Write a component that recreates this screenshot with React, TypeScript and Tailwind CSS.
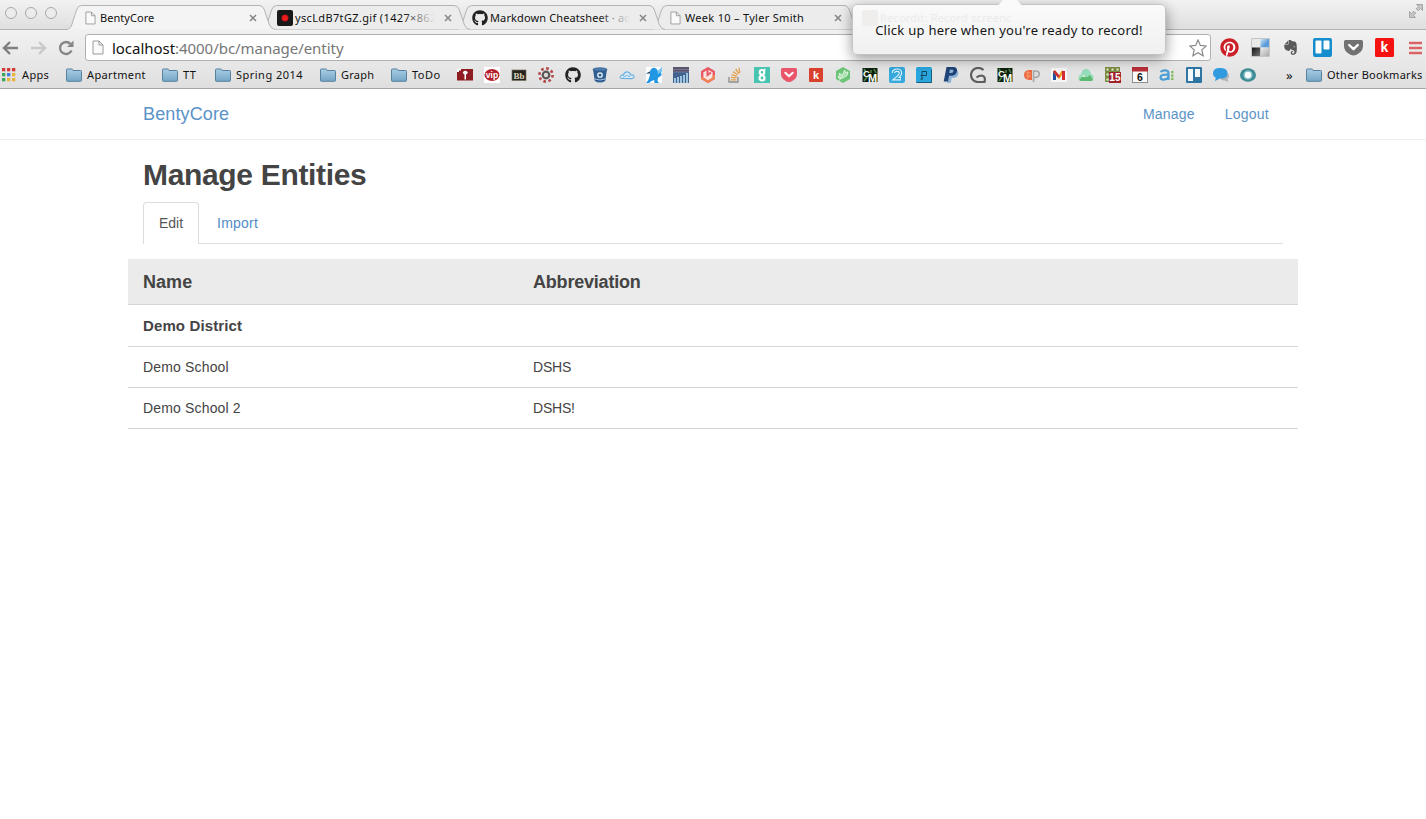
import React from "react";
import { FaGithub, FaPinterest, FaEvernote, FaGetPocket } from "react-icons/fa";

const chromeFont = "font-['Noto_Sans','DejaVu_Sans',sans-serif]";
const pageFont = "font-['Liberation_Sans',Arial,sans-serif]";

function PageIcon({ className }: { className: string }) {
  return (
    <svg viewBox="0 0 12 15" className={className} fill="#fafafa" stroke="#9a9a9a" strokeWidth="1">
      <path d="M1 1h6l4 4v9H1z" />
      <path d="M7 1v4h4" fill="none" />
    </svg>
  );
}

function Folder() {
  return (
    <svg viewBox="0 0 16 14" className="h-[14px] w-4 shrink-0">
      <defs>
        <linearGradient id="folder" x1="0" y1="0" x2="0" y2="1">
          <stop offset="0" stopColor="#a9cde4" />
          <stop offset="1" stopColor="#74a5c6" />
        </linearGradient>
      </defs>
      <path d="M.5 12.5V1.8q0-.8.8-.8h4.6q.6 0 .8.6l.3.9h7.7q.8 0 .8.8v9.2q0 .8-.8.8H1.3q-.8 0-.8-.8z" fill="url(#folder)" stroke="#56819f" />
      <path d="M1 4.5h14" stroke="#9cc3dc" />
    </svg>
  );
}

function Close() {
  return (
    <svg viewBox="0 0 8 8" className="h-2 w-2 shrink-0" stroke="#858585" strokeWidth="1.5">
      <path d="M1 1l6 6M7 1L1 7" />
    </svg>
  );
}

function RecordIcon() {
  return (
    <svg viewBox="0 0 16 16" className="h-4 w-4">
      <rect width="16" height="16" rx="2" fill="#181818" />
      <circle cx="8" cy="8" r="3.3" fill="#ee1c1c" stroke="#8d1010" strokeWidth=".6" />
    </svg>
  );
}

type TabProps = { active?: boolean; title: string; icon: React.ReactNode; layer: string; text: string; fade?: boolean };

function Tab({ active, title, icon, layer, text, fade }: TabProps) {
  return (
    <div className={`relative flex h-[25px] w-[195px] shrink-0 items-center ${layer}`}>
      <svg viewBox="0 0 208 25" className="absolute left-0 top-0 h-[25px] w-[208px]">
        <path
          d="M0 24.5C3 24 4 22 5 19L9.500 5Q11 .5 14.500.5H192Q195.500.5 197 4L202.500 20Q204 24 208 24.500"
          fill={active ? "#f4f4f4" : "#ececec"}
          stroke="#b4b4b4"
        />
        {active && <path d="M1 24.500H207" stroke="#f1f1f1" />}
      </svg>
      <div className="relative flex w-full items-center pl-[15px]">
        <div className="flex h-4 w-4 shrink-0 items-center justify-center">{icon}</div>
        <div className={`relative w-[142px] overflow-hidden whitespace-nowrap text-[11px] leading-4 text-[#111] ${text}`}>
          {title}
          {fade && <div className="absolute right-0 top-0 h-4 w-8 bg-gradient-to-r from-transparent to-[#ececec]" />}
        </div>
        <div className="ml-[9px]">
          <Close />
        </div>
      </div>
    </div>
  );
}

function Ico({ children }: { children: React.ReactNode }) {
  return (
    <svg viewBox="0 0 16 16" className="h-4 w-4 shrink-0 font-['Liberation_Sans',sans-serif] font-bold">
      {children}
    </svg>
  );
}

function CmIcon() {
  return (
    <Ico>
      <rect x=".5" y="1" width="15" height="14" fill="#10200f" />
      <path d="M2 2l2 3M12 2l2 4M2 14l3-4M9 3v3M12 14l2-2" stroke="#4e8b4c" strokeWidth="1.500" />
      <text x="1" y="9.500" fontSize="9.500" fill="#f5fff2">C</text>
      <text x="6" y="14.500" fontSize="11" fill="#f5fff2">M</text>
    </Ico>
  );
}

function Favicons() {
  return (
    <div className="flex gap-[11px]">
      <Ico>
        <rect y="2" width="16" height="11.500" fill="#8f1c20" />
        <path d="M0 2h4v1.500H2V5H0z" fill="#fff" />
        <path d="M5.800 5.200Q8.200 2.400 10.800 5.200q-.2 2-1.800 2.300v5H7.500v-5Q6 7.200 5.800 5.200z" fill="#fff" />
      </Ico>
      <Ico>
        <rect width="16" height="16" fill="#fff" />
        <ellipse cx="8" cy="8" rx="7.500" ry="5.900" fill="#b51f2b" />
        <text x="8" y="11" fontSize="8.500" textAnchor="middle" fill="#fff">vip</text>
      </Ico>
      <Ico>
        <rect x="1" y="3" width="14" height="10.500" fill="#25231e" stroke="#77705c" strokeWidth=".7" />
        <text x="8" y="11.500" fontSize="9" textAnchor="middle" fill="#ddd6bd" className="font-['Liberation_Serif',serif]">Bb</text>
      </Ico>
      <Ico>
        <circle cx="8" cy="8" r="6.600" fill="none" stroke="#b4494c" strokeWidth="2.600" strokeDasharray="2.600 2.584" />
        <circle cx="8" cy="8" r="3.300" fill="#d8d8d8" stroke="#5c5254" strokeWidth="2.200" />
      </Ico>
      <FaGithub className="h-4 w-4 text-[#222]" />
      <Ico>
        <path d="M1 2.500L2.800 14q5.200 3 10.400 0L15 2.500z" fill="#2f5f92" />
        <ellipse cx="8" cy="2.500" rx="7" ry="1.800" fill="#4a7bac" stroke="#2a5483" strokeWidth=".6" />
        <circle cx="8" cy="8" r="2.200" fill="#2f5f92" stroke="#f0f5fa" strokeWidth="1.300" />
        <path d="M3 12q5 2 10 0" stroke="#a9c1d9" fill="none" />
      </Ico>
      <Ico>
        <path d="M2.500 11.500Q0 10.500 2 8.800q1.200-1.200 2.500-.8Q5.500 4.200 9 5q2.400.8 2.300 3 3.200-.6 3.700 1.400.3 2-2.200 2.200z" fill="#d9ebf6" stroke="#6bb0e0" strokeWidth="1.100" />
        <path d="M4 10.500Q7 7 11 9.500" fill="none" stroke="#6bb0e0" strokeWidth=".9" />
      </Ico>
      <Ico>
        <rect width="16" height="16" fill="#fff" />
        <path d="M0 6.500L4 4.500Q5 .5 8.500.8q2.500.3 3 3Q14 3 16 0q.3 4-1.500 6.200L16 7q-1 3-4 3.800L11.500 14l1.500 2H8.500l-.3-3Q5.500 13.500 3 16H0q3.500-3.500 4-9.500z" fill="#2196e3" />
        <path d="M11.500 3.800Q14 3 16 0v3.500l-4 4z" fill="#7cc6f2" />
        <path d="M0 6.500l4-2v1.700z" fill="#444" />
      </Ico>
      <Ico>
        <rect width="16" height="16" fill="#42618d" />
        <path d="M0 0h16v5H0z" fill="#5a5470" />
        <path d="M2 16v-5M5 16v-6M8 16V9M11 16V8M14 16V6" stroke="#b4dcf4" strokeWidth="1.600" />
        <path d="M0 2.500h16M0 5h16" stroke="#868da8" strokeWidth=".6" />
      </Ico>
      <Ico>
        <path d="M8 1.300l5.800 3.400v6.600L8 14.700l-5.800-3.400V4.700z" fill="#fbe5df" stroke="#e95867" strokeWidth="2.400" strokeLinejoin="round" />
        <path d="M2.200 10v1.300L8 14.700l5.800-3.400V8" fill="none" stroke="#f08457" strokeWidth="2.400" strokeLinejoin="round" />
        <path d="M7.500 2v6l3.500-2.500" fill="none" stroke="#e95867" strokeWidth="2" />
      </Ico>
      <Ico>
        <path d="M2 10v5h9v-5" fill="none" stroke="#8c8c8c" strokeWidth="1.300" />
        <path d="M3.800 12.800h5.500M4 10.300l5.500.6M4.600 7.600l5.200 1.800M6 4.600l4.600 3.200M8.600 2l3.200 4.500M12 .8l.8 5" stroke="#e4a04d" strokeWidth="1.300" />
      </Ico>
      <Ico>
        <rect width="16" height="16" fill="#49c4b0" />
        <circle cx="8" cy="5.200" r="2.300" fill="none" stroke="#fff" strokeWidth="2" />
        <circle cx="8" cy="11" r="2.500" fill="none" stroke="#fff" strokeWidth="2.200" />
        <path d="M10 3.200l1.500-1" stroke="#fff" strokeWidth="1.500" />
      </Ico>
      <Ico>
        <path d="M1.500 1h13Q16 1 16 2.500V7q0 4-4 6.500-2 1.500-4 1.500t-4-1.500Q0 11 0 7V2.500Q0 1 1.500 1z" fill="#e9566b" />
        <path d="M4.300 5.800L8 9.300l3.700-3.500" fill="none" stroke="#fff" strokeWidth="2" strokeLinecap="round" strokeLinejoin="round" />
      </Ico>
      <Ico>
        <rect x="1" y="1" width="14" height="14" rx="1" fill="#d9402d" />
        <text x="8" y="12" fontSize="11" textAnchor="middle" fill="#fff">k</text>
      </Ico>
      <Ico>
        <path d="M8 0l7 4v8l-7 4-7-4V4z" fill="#6cc576" />
        <path d="M4.500 13.500L8 7l1.500-4 1 2.500L13 5l-1 3.500-4 2.500-4 .5-1-2 2-.5-1-2.500 3 1" fill="#e2f6e4" fillOpacity=".55" stroke="#e2f6e4" strokeWidth=".9" />
      </Ico>
      <CmIcon />
      <Ico>
        <rect width="16" height="16" rx="2" fill="#35a8dc" />
        <path d="M4.500 6Q4.500 3.200 8 3.200T11.500 6Q11.500 8 7 11.700H12" fill="none" stroke="#e6f6fd" strokeWidth="3.400" />
        <path d="M4.500 6Q4.500 3.200 8 3.200T11.500 6Q11.500 8 7 11.700H11.500" fill="none" stroke="#35a8dc" strokeWidth="1.300" />
      </Ico>
      <Ico>
        <rect width="16" height="16" rx="1.500" fill="#29a6de" />
        <path d="M.5 15.500h15V3" stroke="#195d7a" fill="none" />
        <path d="M6 12V4.500h4.500v4H6M4.500 8.500H6M4.500 12H7" stroke="#12465d" fill="none" strokeWidth="1" />
      </Ico>
      <Ico>
        <path d="M5.500 3h7.500q2.800.5 2.300 4-1 4.200-5.300 4H8.700L7.800 16H4z" fill="#8fb3d6" />
        <path d="M3.500 0h7q4 .3 3.500 4-.8 4.700-5.500 4.700H6L5 14.500H.7zM6.800 2.800L6.300 6h1.900q2.100-.1 2.300-1.900.1-1.300-1.600-1.300z" fill="#1f4478" fillRule="evenodd" />
      </Ico>
      <Ico>
        <path d="M13.500 3Q11 .8 8 1a7 7 0 1 0 0 14h6.500q1.500-6-3-6.500-2.500 0-5 2" fill="none" stroke="#5d5d5f" strokeWidth="2.200" />
      </Ico>
      <CmIcon />
      <Ico>
        <path d="M8 3v10H5Q0 12.500 0 8t5-5z" fill="#ee6840" />
        <path d="M2 6h5M2 9h5M4 4v8" stroke="#f6aa79" strokeWidth=".8" />
        <path d="M9.500 15V4h2.500a3.200 3.200 0 0 1 0 6.400h-2" fill="#ddd" stroke="#a9a9a9" strokeWidth="1.700" />
      </Ico>
      <Ico>
        <rect y="1" width="16" height="14" fill="#f6f6f6" />
        <path d="M3.500 13V4" stroke="#24519f" strokeWidth="3" />
        <path d="M3 4l5 6 4-6" fill="none" stroke="#ef9f27" strokeWidth="2.600" />
        <path d="M12.500 4v9" stroke="#d52b33" strokeWidth="3" />
        <path d="M3 4l5 6" stroke="#cb2e3a" strokeWidth="2.600" />
      </Ico>
      <Ico>
        <path d="M3 14Q0 13 .5 10q.5-2 2.500-2.500Q4 2 8 2t5 5q2.500.5 2.700 3.500Q15.500 13.500 13 14z" fill="#95ddbb" />
        <path d="M1 13l5-5.500 3 3 3-2.500 3 5q-1 1-2 1H3z" fill="#5aba70" />
        <path d="M6 7.500L3.500 10l2.500-.6 2 1z" fill="#f4fff5" />
      </Ico>
      <Ico>
        <rect x="0" y="0" width="15" height="15" fill="#8d9440" />
        <path d="M1 1h3v3H1zM6 1h3v3H6zM11 1h3v3h-3zM1 6h3v3H1zM1 11h3v3H1z" fill="#f1eeb0" stroke="#497447" strokeWidth=".7" />
        <rect x="4" y="5" width="12" height="11" fill="#9f222b" />
        <text x="9.900" y="14.300" fontSize="10" textAnchor="middle" fill="#fff">15</text>
      </Ico>
      <Ico>
        <rect x=".5" y=".5" width="15" height="15" fill="#fafafa" stroke="#8e8e8e" />
        <path d="M0 0h16v4.500H0z" fill="#b92f39" />
        <text x="8" y="14" fontSize="10.500" textAnchor="middle" fill="#111">6</text>
      </Ico>
      <Ico>
        <path d="M1.500 5Q4 2.800 7.500 3.500 9.500 4 9.500 6.500V13M9.500 7.800Q1.500 7 1.500 10.500 2 13 5 12.600 8.500 12.300 9.500 9.500" fill="none" stroke="#4a9ed6" strokeWidth="2.200" />
        <path d="M13.300 4v9.500" stroke="#7db956" strokeWidth="2.300" strokeDasharray="2.300 1.100" />
      </Ico>
      <Ico>
        <rect width="16" height="16" rx="1" fill="#2f75a4" />
        <rect x="2" y="2" width="5" height="12" fill="#f3f8fb" />
        <rect x="9" y="2" width="5" height="8" fill="#f3f8fb" />
      </Ico>
      <Ico>
        <path d="M10 5q6 0 6 4 0 2-1.500 3l1 3-3.500-1.500Q8 14 7 11z" fill="#aeb4b8" />
        <path d="M7 1q7.500 0 7.500 5.200T7 11.500L2 14l.8-3.300Q0 9.500 0 6.200 0 1 7 1z" fill="#329be0" />
      </Ico>
      <Ico>
        <ellipse cx="8" cy="8" rx="8" ry="6.800" fill="#3c8a94" />
        <circle cx="8" cy="8" r="4" fill="#f5fbfb" stroke="#86bdc4" strokeWidth="1.500" />
      </Ico>
    </div>
  );
}

function TabStrip() {
  const doc = <PageIcon className="h-[14px] w-[11px]" />;
  return (
    <div className="relative flex h-[30px] items-start border-b border-[#b4b4b4] bg-gradient-to-b from-[#f2f2f2] to-[#dfdfdf] pt-[5px]">
      <div className="flex w-[67px] shrink-0 gap-2 pl-[5px] pt-[2px]">
        <div className="h-3 w-3 rounded-full border border-[#a9a9a9] bg-[#ececec]" />
        <div className="h-3 w-3 rounded-full border border-[#a9a9a9] bg-[#ececec]" />
        <div className="h-3 w-3 rounded-full border border-[#a9a9a9] bg-[#ececec]" />
      </div>
      <Tab active layer="z-40" icon={doc} title="BentyCore" text="tracking-[0.050px] pl-[2px]" />
      <Tab layer="z-30" icon={<RecordIcon />} title="yscLdB7tGZ.gif (1427×862)" text="tracking-[0.350px] pl-[2px]" fade />
      <Tab layer="z-20" icon={<FaGithub className="h-4 w-4 text-[#222]" />} title="Markdown Cheatsheet · adam-p" text="tracking-[0.120px] pl-[2px]" fade />
      <Tab layer="z-10" icon={doc} title="Week 10 – Tyler Smith" text="tracking-[0.300px] pl-[2px]" />
      <svg viewBox="0 0 14 14" className="ml-auto mr-[3px] mt-[-1px] h-[14px] w-[14px] self-start" fill="#c6c6c6" stroke="#989898" strokeWidth=".8">
        <path d="M7.500.5h6v6l-2-2-2.300 2.300-2-2L9.500 2.500zM6.500 13.500h-6v-6l2 2L4.800 7.200l2 2L4.500 11.500z" />
      </svg>
    </div>
  );
}

function Toolbar() {
  return (
    <div className="flex h-[32px] items-center bg-gradient-to-b from-[#f1f1f1] to-[#e8e8e8] pt-[3px]">
      <svg viewBox="0 0 16 14" className="ml-[2px] h-[14px] w-4" fill="none" stroke="#808080" strokeWidth="2.400">
        <path d="M8 1L2 7l6 6M2 7h14" />
      </svg>
      <svg viewBox="0 0 16 14" className="ml-[13px] h-[14px] w-4" fill="none" stroke="#c9c9c9" strokeWidth="2.400">
        <path d="M8 1l6 6-6 6M14 7H0" />
      </svg>
      <svg viewBox="0 0 16 16" className="ml-[11px] h-4 w-4" fill="none" stroke="#878787" strokeWidth="2.400">
        <path d="M13.500 10.500A6 6 0 1 1 12.500 4" />
        <path d="M15.500.5v6.500H9z" fill="#878787" stroke="none" />
      </svg>
      <div className="ml-[11px] flex h-[27px] w-[1126px] items-center rounded-[3px] border border-[#b0b0b0] bg-white pl-[6px] pr-[3px]">
        <PageIcon className="h-[15px] w-3" />
        <div className="ml-[8px] text-[15px] leading-5 tracking-[-0.040px] text-[#777]">
          <span className="text-[#111]">localhost</span>:4000/bc/manage/entity
        </div>
        <svg viewBox="0 0 18 18" className="ml-auto h-[18px] w-[18px]" fill="#fff" stroke="#8a8a8a" strokeWidth="1.200">
          <path d="M9 1l2.400 5.400 5.800.6-4.400 3.900 1.300 5.800L9 13.700l-5.100 3 1.300-5.800L.8 7l5.800-.6z" />
        </svg>
      </div>
      <div className="ml-[9px] flex h-[19px] w-[19px] items-center justify-center rounded-full bg-white">
        <FaPinterest className="h-[19px] w-[19px] text-[#cb2027]" />
      </div>
      <svg viewBox="0 0 19 19" className="ml-[12px] h-[19px] w-[19px]">
        <defs>
          <linearGradient id="blue" x1="0" y1="0" x2="1" y2="1">
            <stop offset="0" stopColor="#d5e6f5" />
            <stop offset=".6" stopColor="#5b9dda" />
          </linearGradient>
          <linearGradient id="dark" x1="0" y1="0" x2="1" y2="1">
            <stop offset="0" stopColor="#111" />
            <stop offset="1" stopColor="#777" />
          </linearGradient>
          <linearGradient id="silver" x1="0" y1="0" x2="1" y2="1">
            <stop offset="0" stopColor="#eee" />
            <stop offset="1" stopColor="#aaa" />
          </linearGradient>
        </defs>
        <path d="M.5.500h18v18H.5z" fill="#e9e9e9" stroke="#c5c5c5" />
        <path d="M9.500 1H18v8.500H9.500z" fill="url(#blue)" />
        <path d="M1 9.500h8.500V18H1z" fill="url(#dark)" />
        <path d="M9.500 9.500H18V18H9.500z" fill="url(#silver)" />
      </svg>
      <FaEvernote className="ml-[12px] h-[17px] w-[17px] text-[#5b5b5b]" />
      <svg viewBox="0 0 19 19" className="ml-[14px] h-[19px] w-[19px]">
        <rect width="19" height="19" rx="2" fill="#168dcc" />
        <rect x="2.500" y="2.500" width="6" height="13" rx="1" fill="#fff" />
        <rect x="10.500" y="2.500" width="6" height="9" rx="1" fill="#fff" />
      </svg>
      <svg viewBox="0 0 19 17" className="ml-[12px] h-[17px] w-[19px]">
        <path d="M1.500 1h16Q19 1 19 2.500V7q0 4.500-4.500 7.500-2.500 2-5 2t-5-2Q0 11.500 0 7V2.500Q0 1 1.500 1z" fill="#727272" />
        <path d="M5.200 6l4.300 4.200L13.800 6" fill="none" stroke="#fff" strokeWidth="2.400" strokeLinecap="round" strokeLinejoin="round" />
      </svg>
      <svg viewBox="0 0 19 19" className="ml-[12px] h-[19px] w-[19px] font-['Liberation_Sans',sans-serif] font-bold">
        <rect width="19" height="19" rx="1.500" fill="#f71212" />
        <text x="9.500" y="14" fontSize="14" textAnchor="middle" fill="#fff">k</text>
      </svg>
      <svg viewBox="0 0 13 14" className="ml-[15px] h-[14px] w-[13px]" stroke="#d96464" strokeWidth="2.400">
        <path d="M0 2h13M0 7h13M0 12h13" />
      </svg>
    </div>
  );
}

function AppsIcon() {
  const colors = ["#d23b35", "#d23b35", "#d23b35", "#3ba55a", "#3d7fd6", "#e8b53c", "#3ba55a", "#e8b53c", "#e8b53c"];
  return (
    <svg viewBox="0 0 14 14" className="h-[14px] w-[14px] shrink-0">
      {colors.map((c, i) => (
        <rect key={i} x={(i % 3) * 5} y={Math.floor(i / 3) * 5} width="3.300" height="3.300" fill={c} />
      ))}
    </svg>
  );
}

const folders = [
  { label: "Apartment", width: "w-[96px]", text: "tracking-[0.350px]" },
  { label: "TT", width: "w-[53px]", text: "tracking-[0.500px]" },
  { label: "Spring 2014", width: "w-[105px]", text: "tracking-[0.480px]" },
  { label: "Graph", width: "w-[71px]", text: "tracking-[0.250px]" },
  { label: "ToDo", width: "w-[66px]", text: "tracking-[0.500px]" },
];

function BookmarksBar() {
  return (
    <div className="flex h-[27px] items-center border-b border-[#a6a6a6] bg-gradient-to-b from-[#e8e8e8] to-[#dfdfdf] pl-[2px] text-[11px] leading-4 text-[#111]">
      <div className="flex w-[64px] shrink-0 items-center gap-[6px]">
        <AppsIcon />
        <span className="tracking-[0.350px]">Apps</span>
      </div>
      {folders.map((f) => (
        <div key={f.label} className={`flex shrink-0 items-center gap-[5px] whitespace-nowrap ${f.width}`}>
          <Folder />
          <span className={f.text}>{f.label}</span>
        </div>
      ))}
      <Favicons />
      <span className="ml-[30px] text-[13px]">»</span>
      <div className="ml-auto flex w-[120px] items-center gap-[5px] whitespace-nowrap">
        <Folder />
        <span className="tracking-[0.280px]">Other Bookmarks</span>
      </div>
    </div>
  );
}

function RecordPopover() {
  return (
    <div className="absolute left-[852px] top-[4px] z-50 flex h-[51px] w-[314px] items-center justify-center rounded-[5px] border border-[#c4c4c4] bg-gradient-to-b from-[#fafafa] to-[#f0f0f0] shadow-[0_4px_14px_rgba(0,0,0,0.4)]">
      <svg viewBox="0 0 26 6" className="absolute left-[144px] top-[-5px] h-[6px] w-[26px]">
        <path d="M0 6Q2 5 6 0h14q4 5 6 6z" fill="#fafafa" />
      </svg>
      <div className="absolute left-[9px] top-[5px] flex items-center gap-[2px] text-[11px] leading-4 text-[#ebebeb]">
        <span className="h-4 w-4 rounded-[3px] bg-[#f0eded]" />
        <span className="tracking-[0.200px]">Recordit: Record screenc</span>
      </div>
      <div className="relative whitespace-nowrap text-[13px] leading-5 tracking-[0.260px] text-[#151515]">Click up here when you're ready to record!</div>
    </div>
  );
}

const rows = [
  { name: "Demo School", abbr: "DSHS" },
  { name: "Demo School 2", abbr: "DSHS!" },
];

export default function App() {
  return (
    <div className="relative h-[819px] w-[1426px] overflow-hidden bg-white">
      <header className={chromeFont}>
        <TabStrip />
        <Toolbar />
        <BookmarksBar />
        <RecordPopover />
      </header>
      <div className={`text-[14px] leading-5 text-[#444] ${pageFont}`}>
        <nav className="flex h-[51px] items-center border-b border-[#eee] pl-[143px] pr-[157px] text-[#5a93c7]">
          <a className="mr-auto text-[18px] tracking-[0.120px]">BentyCore</a>
          <a className="tracking-[0.180px]">Manage</a>
          <a className="ml-[30px] tracking-[0.250px]">Logout</a>
        </nav>
        <main className="mx-auto w-[1170px]">
          <h1 className="ml-[15px] pt-[18px] text-[30px] font-bold leading-[33px] tracking-[-0.330px] text-[#444]">Manage Entities</h1>
          <div className="mx-[15px] mt-[11px] flex h-[42px] border-b border-[#ddd]">
            <div className="h-[42px] w-[56px] rounded-t border border-b-0 border-[#ddd] bg-white pl-[15px] pt-[10px] text-[#555]">Edit</div>
            <div className="pl-[18px] pt-[11px] tracking-[0.250px] text-[#4f8cc6]">Import</div>
          </div>
          <div className="mt-[15px]">
            <div className="grid h-[46px] grid-cols-3 items-center border-b border-[#d6d6d6] bg-[#ebebeb] text-[18px] font-bold">
              <div className="pl-[15px] tracking-[0.050px]">Name</div>
              <div className="pl-[15px] tracking-[-0.200px]">Abbreviation</div>
            </div>
            <div className="flex h-[42px] items-center border-b border-[#d6d6d6] pl-[15px] text-[15px] font-bold tracking-[0.120px]">Demo District</div>
            {rows.map((r) => (
              <div key={r.name} className="grid h-[41px] grid-cols-3 items-center border-b border-[#d6d6d6]">
                <div className="pl-[15px] tracking-[0.160px]">{r.name}</div>
                <div className="pl-[15px] tracking-[-0.200px]">{r.abbr}</div>
              </div>
            ))}
          </div>
        </main>
      </div>
    </div>
  );
}
